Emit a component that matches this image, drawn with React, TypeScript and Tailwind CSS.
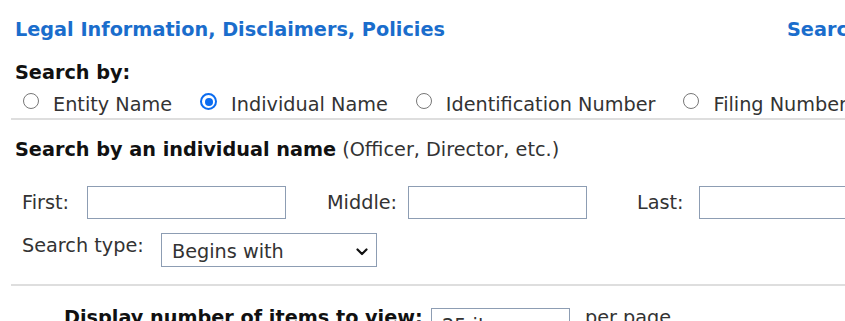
import React from "react";

const RADIOS = [
  { label: "Entity Name", checked: false },
  { label: "Individual Name", checked: true },
  { label: "Identification Number", checked: false },
  { label: "Filing Number", checked: false },
];

function Radio({ checked }: { checked: boolean }) {
  if (checked) {
    return (
      <span className="flex h-[17px] w-[17px] shrink-0 items-center justify-center rounded-full border-[2.5px] border-[#0b6cf0] bg-white">
        <span className="h-[8px] w-[8px] rounded-full bg-[#0b6cf0]" />
      </span>
    );
  }
  return <span className="h-[16px] w-[16px] shrink-0 rounded-full border border-[#777] bg-white" />;
}

function Chevron() {
  return (
    <svg width="12" height="8" viewBox="0 0 12 8" className="shrink-0">
      <path d="M1.5 1.5 L6 6 L10.5 1.5" fill="none" stroke="#111" strokeWidth="2.2" strokeLinecap="round" strokeLinejoin="round" />
    </svg>
  );
}

export default function App() {
  return (
    <div className="h-[321px] w-[845px] overflow-hidden bg-white font-['DejaVu_Sans','Verdana',sans-serif] text-[19.25px] leading-[23px] text-[#333]">
      <div className="w-[1100px]">
        <div className="flex pl-[15px] pt-[18px] font-bold text-[#1a6dcc]">
          <a className="block w-[772px] shrink-0">Legal Information, Disclaimers, Policies</a>
          <a className="block whitespace-nowrap">Search Tips</a>
        </div>

        <div className="mt-[20px] pl-[15px] font-bold text-[#111]">Search by:</div>

        <div className="mt-[9px] flex pl-[23px]">
          {RADIOS.map((r) => (
            <label key={r.label} className="mr-[28px] flex items-start gap-[14px] whitespace-nowrap">
              <Radio checked={r.checked} />
              <span>{r.label}</span>
            </label>
          ))}
        </div>

        <div className="ml-[11px] mt-[2px] h-[2px] bg-[#dedede]" />

        <div className="mt-[18px] pl-[15px]">
          <span className="font-bold text-[#111]">Search by an individual name</span> (Officer, Director, etc.)
        </div>

        <div className="mt-[25px] flex items-center pl-[22px]">
          <span className="w-[65px]">First:</span>
          <div className="h-[33px] w-[199px] border border-[#8d9db3] bg-white" />
          <span className="ml-[41px] w-[81px]">Middle:</span>
          <div className="h-[33px] w-[179px] border border-[#8d9db3] bg-white" />
          <span className="ml-[50px] w-[62px]">Last:</span>
          <div className="h-[33px] w-[199px] border border-[#8d9db3] bg-white" />
        </div>

        <div className="mt-[14px] flex items-start pl-[22px]">
          <span className="mt-[1px] w-[139px]">Search type:</span>
          <div className="flex h-[34px] w-[216px] items-center justify-between border border-[#8d9db3] bg-white pl-[10px] pr-[8px] pt-[3px]">
            <span>Begins with</span>
            <Chevron />
          </div>
        </div>

        <div className="ml-[11px] mt-[17px] h-[2px] bg-[#dedede]" />

        <div className="mt-[22px] flex items-start pl-[64px]">
          <span className="-mt-[2px] w-[367px] whitespace-nowrap font-bold text-[#111]">Display number of items to view:</span>
          <div className="flex h-[34px] w-[139px] items-center border border-[#8d9db3] bg-white pl-[10px]">
            <span>25 items</span>
          </div>
          <span className="-mt-[2px] ml-[15px]">per page</span>
        </div>
      </div>
    </div>
  );
}
